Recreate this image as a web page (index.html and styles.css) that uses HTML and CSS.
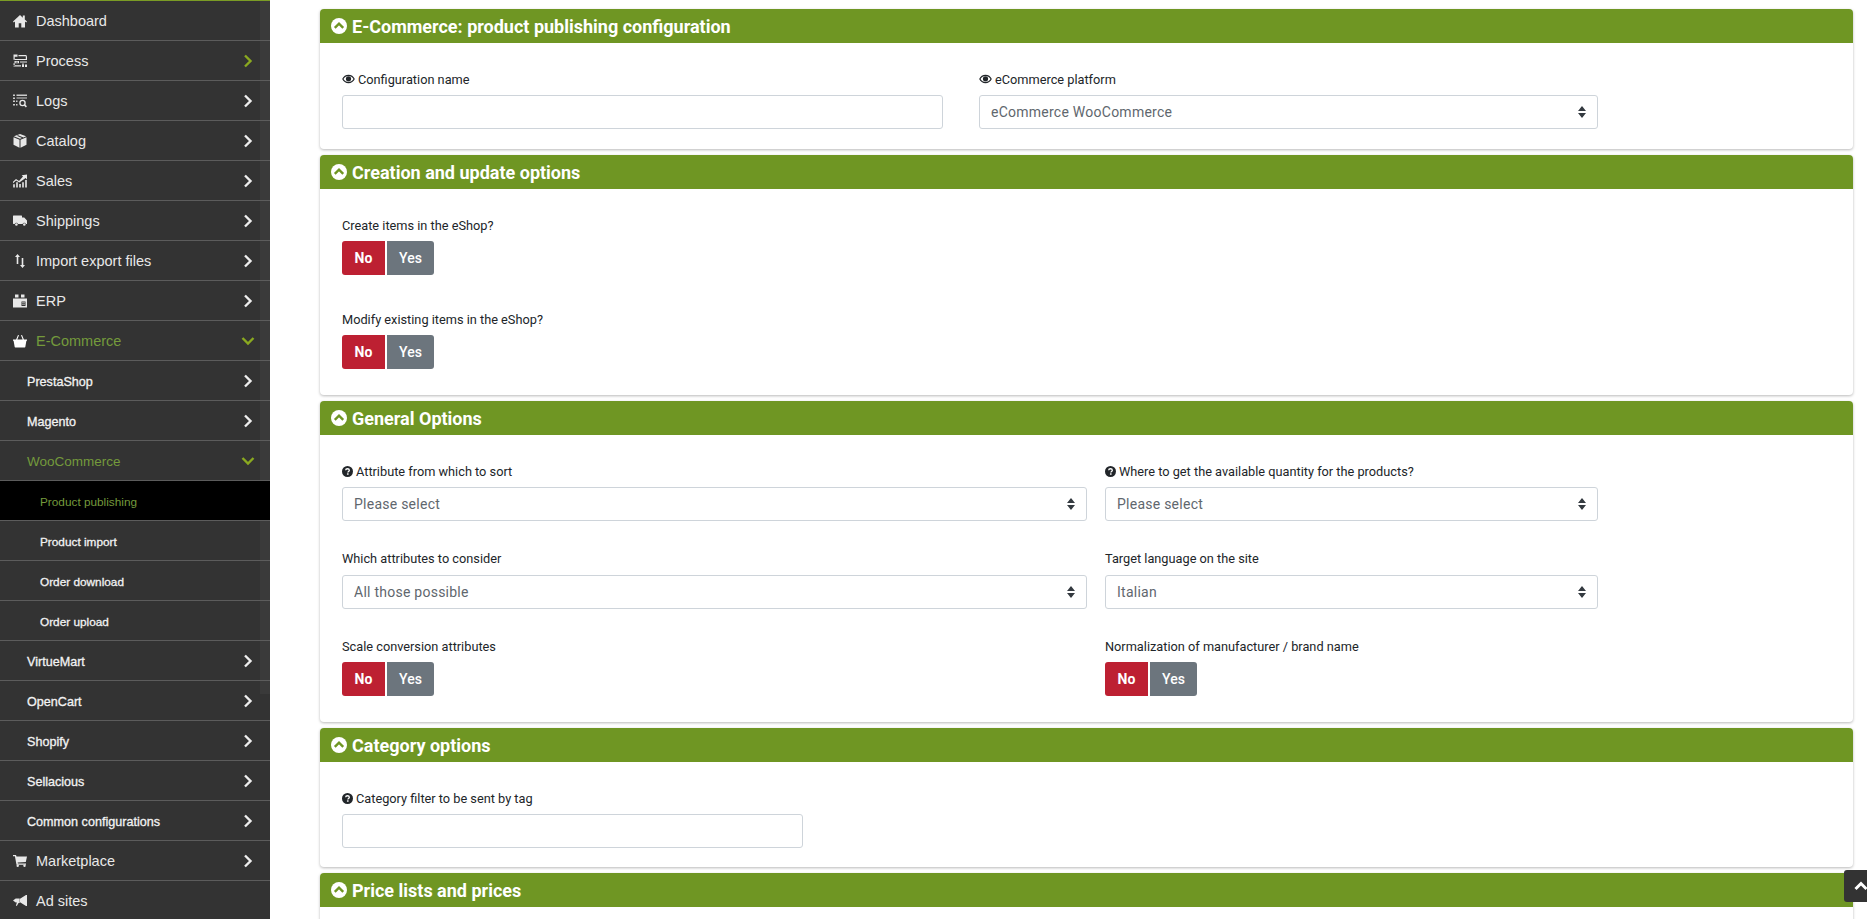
FILE: index.html
```html
<!DOCTYPE html>
<html lang="en">
<head>
<meta charset="utf-8">
<title>E-Commerce: product publishing configuration</title>
<link rel="stylesheet" href="styles.css">
</head>
<body>
<svg class="defs" width="0" height="0" aria-hidden="true">
  <symbol id="i-right" viewBox="0 0 10 14"><path d="M2 1.500 7.500 7 2 12.500" fill="none" stroke="currentColor" stroke-width="2.400"/></symbol>
  <symbol id="i-down" viewBox="0 0 14 10"><path d="M1.500 2 7 7.500 12.500 2" fill="none" stroke="currentColor" stroke-width="2.400"/></symbol>
  <symbol id="i-home" viewBox="0 0 14 13"><path d="M7 .5 0 7l.8.9L2 6.900V13h3.700V8.800h2.600V13H12V6.900l1.200 1 .8-.9-2.200-2V1h-2v2.300z" fill="currentColor"/></symbol>
  <symbol id="i-process" viewBox="0 0 14 13"><path d="M.5 0h4v2.200h-4zM.5 2.200h1.200v3H.5zM5.500.6h8v1.100h-8zM12.800 1.700H14v2.800h-1.200zM1.500 4.500H14v1H1.500zM1.500 6.500h4.500v2.300H1.500zM2.600 7.200h2.400v.9H2.600zM7 7h7v1.100H7zM.5 8.800h1.200v2.700H.5zM.5 10.800h7.500v1.200H.5zM9 10h2v2.500H9zM12 10h2v2.500h-2zM9.500 8.800h1v1.200h-1z" fill="currentColor" fill-rule="evenodd"/></symbol>
  <symbol id="i-logs" viewBox="0 0 14 13"><path d="M0 0h2v1.500H0zM3.500 0H14v1.500H3.500zM3.500 3H14v1H3.500zM0 3h2v1.500H0zM0 6h2v1.500H0zM0 9.500h2V11H0zM3 6h1.500v1.500H3zM3 9.500h1.500V11H3z" fill="currentColor" opacity=".85"/><circle cx="9.500" cy="8.500" r="2.600" fill="none" stroke="currentColor" stroke-width="1.300"/><path d="m11.400 10.400 2 2" stroke="currentColor" stroke-width="1.500"/></symbol>
  <symbol id="i-box" viewBox="0 0 14 14"><path d="M7 0 .9 2.300 7 4.800l2-.8L3.800 1.800 5.200 1.300 10.500 3.500 13.100 2.300zM.5 3.300v7.500L6.500 13.700V5.700zM13.500 3.300 7.500 5.700v8l6-2.900z" fill="currentColor"/></symbol>
  <symbol id="i-sales" viewBox="0 0 14 13"><path d="M0 7.200 3 4.600l3 1.800 4-4.300L8.700.8 14 0v5l-1.400-1.500-6.300 4.600-3.200-2L0 8.700z" fill="currentColor"/><path d="M0 9.800h2V13H0zM3 7.800h2V13H3zM6 9.500h2V13H6zM9 7.800h2V13H9zM12 5.600h2V13h-2z" fill="currentColor" opacity=".8"/></symbol>
  <symbol id="i-truck" viewBox="0 0 14 11"><path d="M0 .5C0 .2.200 0 .5 0h8c.3 0 .5.200.5.500V2h2.200L14 5v3.500h-1.100a1.700 1.700 0 0 0-3.300 0H5a1.700 1.700 0 0 0-3.300 0H.5c-.3 0-.5-.200-.5-.500z" fill="currentColor"/><circle cx="3.400" cy="9" r="1.300" fill="currentColor"/><circle cx="11.300" cy="9" r="1.300" fill="currentColor"/></symbol>
  <symbol id="i-updown" viewBox="0 0 10 14"><path d="M2.500 0 5 3H3.300v7H1.700V3H0zM7.500 14 5 11h1.700V4h1.600v7H10z" fill="currentColor"/></symbol>
  <symbol id="i-erp" viewBox="0 0 14 13"><path d="M2 0h3.500v3H2zM8 0h3.500v3H8zM0 4h14v9H0zM8.500 7v4.500h4V7z" fill="currentColor" fill-rule="evenodd"/><path d="M9 8h3v.6H9zM9 9.300h3v.6H9z" fill="currentColor"/></symbol>
  <symbol id="i-basket" viewBox="0 0 14 13"><path d="M0 5h3.100L5 .4l1 .4L4.300 5h5.400L8 .8l1-.4L10.900 5H14v1.200h-.6L12.300 12.500c0 .3-.3.500-.6.500H2.300c-.3 0-.6-.2-.6-.5L.6 6.200H0z" fill="currentColor"/></symbol>
  <symbol id="i-cart" viewBox="0 0 14 12"><path d="M0 0h3l.5 1.500H14l-1.200 5.500-8.200.6.300 1h8.100v1.200H3.500L1.900 1.200H0z" fill="currentColor"/><circle cx="4.700" cy="10.800" r="1.200" fill="currentColor"/><circle cx="11.500" cy="10.800" r="1.200" fill="currentColor"/></symbol>
  <symbol id="i-bullhorn" viewBox="0 0 14 12"><path d="M13 0h1v11h-1L7 7.300V3.700zM5.500 3.500h1.200v4.500H5.500L3.800 11l-.9-.4 1-3H2.700L0 5.500 2.700 3.500z" fill="currentColor"/></symbol>
  <symbol id="i-circle-up" viewBox="0 0 16 16"><circle cx="8" cy="8" r="8" fill="currentColor"/><path d="M3.800 9.800 8 5.600l4.200 4.200" fill="none" stroke="#6f9623" stroke-width="2.400"/></symbol>
  <symbol id="i-eye" viewBox="0 0 14 10"><path d="M7 .5C4 .5 1.500 2.200.2 5 1.500 7.800 4 9.500 7 9.500s5.500-1.700 6.800-4.500C12.500 2.200 10 .5 7 .5zm0 1.300C9.100 1.800 11.300 3 12.400 5 11.300 7 9.100 8.200 7 8.200S2.700 7 1.600 5C2.700 3 4.900 1.800 7 1.800z" fill="currentColor"/><circle cx="7" cy="4.800" r="2.800" fill="currentColor"/></symbol>
  <symbol id="i-question" viewBox="0 0 12 12"><circle cx="6" cy="6" r="6" fill="currentColor"/><path d="M4 4.600C4 3.500 4.900 3 6 3s2 .6 2 1.600c0 1.400-1.600 1.300-1.600 2.500" fill="none" stroke="#fff" stroke-width="1.400"/><path d="M5.400 8h1.800v1.500H5.400z" fill="#fff"/></symbol>
  <symbol id="i-chev-up" viewBox="0 0 14 10"><path d="M1.500 8 7 2.500 12.500 8" fill="none" stroke="currentColor" stroke-width="3"/></symbol>
</svg>

<div class="page">
  <nav class="sidebar">
    <span class="sb-track"></span>
    <a class="nav-item"><svg class="nav-ic"><use href="#i-home"/></svg><span class="nav-text">Dashboard</span></a>
    <a class="nav-item"><svg class="nav-ic"><use href="#i-process"/></svg><span class="nav-text">Process</span><svg class="chev green"><use href="#i-right"/></svg></a>
    <a class="nav-item"><svg class="nav-ic"><use href="#i-logs"/></svg><span class="nav-text">Logs</span><svg class="chev"><use href="#i-right"/></svg></a>
    <a class="nav-item"><svg class="nav-ic"><use href="#i-box"/></svg><span class="nav-text">Catalog</span><svg class="chev"><use href="#i-right"/></svg></a>
    <a class="nav-item"><svg class="nav-ic"><use href="#i-sales"/></svg><span class="nav-text">Sales</span><svg class="chev"><use href="#i-right"/></svg></a>
    <a class="nav-item"><svg class="nav-ic"><use href="#i-truck"/></svg><span class="nav-text">Shippings</span><svg class="chev"><use href="#i-right"/></svg></a>
    <a class="nav-item"><svg class="nav-ic"><use href="#i-updown"/></svg><span class="nav-text">Import export files</span><svg class="chev"><use href="#i-right"/></svg></a>
    <a class="nav-item"><svg class="nav-ic"><use href="#i-erp"/></svg><span class="nav-text">ERP</span><svg class="chev"><use href="#i-right"/></svg></a>
    <a class="nav-item open"><svg class="nav-ic white"><use href="#i-basket"/></svg><span class="nav-text">E-Commerce</span><svg class="chev-d"><use href="#i-down"/></svg></a>
    <a class="nav-item sub"><span class="nav-text">PrestaShop</span><svg class="chev"><use href="#i-right"/></svg></a>
    <a class="nav-item sub"><span class="nav-text">Magento</span><svg class="chev"><use href="#i-right"/></svg></a>
    <a class="nav-item sub open"><span class="nav-text">WooCommerce</span><svg class="chev-d"><use href="#i-down"/></svg></a>
    <a class="nav-item subsub active"><span class="nav-text">Product publishing</span></a>
    <a class="nav-item subsub"><span class="nav-text">Product import</span></a>
    <a class="nav-item subsub"><span class="nav-text">Order download</span></a>
    <a class="nav-item subsub"><span class="nav-text">Order upload</span></a>
    <a class="nav-item sub"><span class="nav-text">VirtueMart</span><svg class="chev"><use href="#i-right"/></svg></a>
    <a class="nav-item sub"><span class="nav-text">OpenCart</span><svg class="chev"><use href="#i-right"/></svg></a>
    <a class="nav-item sub"><span class="nav-text">Shopify</span><svg class="chev"><use href="#i-right"/></svg></a>
    <a class="nav-item sub"><span class="nav-text">Sellacious</span><svg class="chev"><use href="#i-right"/></svg></a>
    <a class="nav-item sub"><span class="nav-text">Common configurations</span><svg class="chev"><use href="#i-right"/></svg></a>
    <a class="nav-item"><svg class="nav-ic"><use href="#i-cart"/></svg><span class="nav-text">Marketplace</span><svg class="chev"><use href="#i-right"/></svg></a>
    <a class="nav-item"><svg class="nav-ic"><use href="#i-bullhorn"/></svg><span class="nav-text">Ad sites</span></a>
  </nav>

  <main class="content">
    <section class="card">
      <h2 class="card-head"><svg class="head-ic"><use href="#i-circle-up"/></svg>E-Commerce: product publishing configuration</h2>
      <div class="card-body grid-a">
        <div class="field">
          <label class="lbl"><svg class="eye"><use href="#i-eye"/></svg>Configuration name</label>
          <input class="ctl" type="text">
        </div>
        <div class="field">
          <label class="lbl"><svg class="eye"><use href="#i-eye"/></svg>eCommerce platform</label>
          <select class="ctl sel"><option>eCommerce WooCommerce</option></select>
        </div>
      </div>
    </section>

    <section class="card">
      <h2 class="card-head"><svg class="head-ic"><use href="#i-circle-up"/></svg>Creation and update options</h2>
      <div class="card-body stack">
        <div class="field">
          <label class="lbl">Create items in the eShop?</label>
          <div class="toggle"><button class="btn no">No</button><button class="btn yes">Yes</button></div>
        </div>
        <div class="field">
          <label class="lbl">Modify existing items in the eShop?</label>
          <div class="toggle"><button class="btn no">No</button><button class="btn yes">Yes</button></div>
        </div>
      </div>
    </section>

    <section class="card">
      <h2 class="card-head"><svg class="head-ic"><use href="#i-circle-up"/></svg>General Options</h2>
      <div class="card-body grid-b">
        <div class="field">
          <label class="lbl"><svg class="qm"><use href="#i-question"/></svg>Attribute from which to sort</label>
          <select class="ctl sel"><option>Please select</option></select>
        </div>
        <div class="field">
          <label class="lbl"><svg class="qm"><use href="#i-question"/></svg>Where to get the available quantity for the products?</label>
          <select class="ctl sel"><option>Please select</option></select>
        </div>
        <div class="field">
          <label class="lbl">Which attributes to consider</label>
          <select class="ctl sel"><option>All those possible</option></select>
        </div>
        <div class="field">
          <label class="lbl">Target language on the site</label>
          <select class="ctl sel"><option>Italian</option></select>
        </div>
        <div class="field">
          <label class="lbl">Scale conversion attributes</label>
          <div class="toggle"><button class="btn no">No</button><button class="btn yes">Yes</button></div>
        </div>
        <div class="field">
          <label class="lbl">Normalization of manufacturer / brand name</label>
          <div class="toggle"><button class="btn no">No</button><button class="btn yes">Yes</button></div>
        </div>
      </div>
    </section>

    <section class="card">
      <h2 class="card-head"><svg class="head-ic"><use href="#i-circle-up"/></svg>Category options</h2>
      <div class="card-body grid-c">
        <div class="field">
          <label class="lbl"><svg class="qm"><use href="#i-question"/></svg>Category filter to be sent by tag</label>
          <input class="ctl" type="text">
        </div>
      </div>
    </section>

    <section class="card">
      <h2 class="card-head"><svg class="head-ic"><use href="#i-circle-up"/></svg>Price lists and prices</h2>
      <div class="card-body tail"></div>
    </section>
  </main>
  <a class="to-top"><svg><use href="#i-chev-up"/></svg></a>
</div>
</body>
</html>
```

FILE: styles.css
```css
* { box-sizing: border-box; }
html, body { margin: 0; height: 100%; overflow: hidden; }
body { background: #fff; font-family: Roboto, "Liberation Sans", sans-serif; color: #212529; }
.defs { position: absolute; }
.page { display: flex; height: 919px; position: relative; overflow: hidden; }

.sidebar { width: 270px; flex: none; background: #333; border-top: 1px solid #7b9c25; position: relative; font-family: "Liberation Sans", Arial, sans-serif; }
.sb-track { position: absolute; top: 0; right: 0; width: 10px; height: 693px; background: #3a3a3a; }
.nav-item { position: relative; display: flex; align-items: center; height: 40px; padding-left: 13px; border-bottom: 1px solid #5c5c5c; color: #e8e8e8; font-size: 14.500px; }
.nav-ic { width: 14px; height: 14px; margin-right: 9px; color: #e8e8e8; flex: none; }
.nav-ic.white { color: #fff; }
.nav-text { flex: 1; }
.chev { width: 10px; height: 14px; margin-right: 17px; color: #eee; flex: none; }
.chev.green { color: #8aa920; }
.chev-d { width: 14px; height: 10px; margin-right: 15px; color: #8aa920; flex: none; }
.nav-item.open { color: #749a3c; }
.sub { padding-left: 27px; padding-top: 2px; font-size: 12.600px; color: #f2f2f2; -webkit-text-stroke: .3px #f2f2f2; }
.sub .chev { position: relative; top: -1px; }
.sub.open { color: #749a3c; -webkit-text-stroke: 0; font-size: 13.500px; padding-top: 1px; }
.subsub { padding-left: 40px; padding-top: 2px; font-size: 11.800px; color: #f2f2f2; -webkit-text-stroke: .3px #f2f2f2; }
.subsub.active { background: #000; color: #749a3c; -webkit-text-stroke: 0; }

.content { flex: 1; min-width: 0; padding: 9px 14px 0 50px; display: flex; flex-direction: column; gap: 6px; overflow: hidden; }
.card { flex: none; background: #fff; border-radius: 4px; box-shadow: 0 1px 3px rgba(0,0,0,.28); }
.card-head { margin: 0; height: 34px; display: flex; align-items: center; gap: 5px; padding-left: 11px; background: #6f9623; color: #fff; font-size: 18px; font-weight: 700; border-radius: 4px 4px 0 0; }
.head-ic { width: 16px; height: 16px; color: #fff; flex: none; }
.card-body { padding: 26px 22px 19px; }
.grid-a { display: grid; grid-template-columns: 601px 619px; column-gap: 36px; padding-bottom: 20px; }
.stack { display: flex; flex-direction: column; gap: 34px; padding-bottom: 26px; }
.grid-b { display: grid; grid-template-columns: 745px 493px; column-gap: 18px; row-gap: 27.500px; padding-bottom: 26px; }
.grid-c { width: 505px; }
.tail { height: 120px; }

.field { display: flex; flex-direction: column; gap: 6px; }
.lbl { display: flex; align-items: center; height: 20px; font-size: 12.750px; color: #212529; }
.eye { width: 13px; height: 10px; margin-right: 3px; color: #212529; }
.qm { width: 11px; height: 11px; margin-right: 3px; color: #212529; }
.ctl { display: block; width: 100%; height: 34px; border: 1px solid #ced4da; border-radius: 3px; background: #fff; padding: 0 11px; font: 400 14px Roboto, sans-serif; letter-spacing: .25px; color: #5f676e; }
.sel { appearance: none; -webkit-appearance: none; background-repeat: no-repeat; background-position: right 11px center; background-size: 8px 12px; background-image: url("data:image/svg+xml,%3Csvg xmlns='http://www.w3.org/2000/svg' viewBox='0 0 8 12'%3E%3Cpath d='M4 0 8 5H0zM4 12 0 7h8z' fill='%23343a40'/%3E%3C/svg%3E"); }

.toggle { display: flex; gap: 2px; }
.btn { height: 34px; border: 0; padding: 0; font: 700 14px Roboto, sans-serif; color: #fff; }
.no { width: 43px; background: #bd2032; border-radius: 3px 0 0 3px; }
.yes { width: 47px; background: #6c757d; border-radius: 0 3px 3px 0; font-weight: 500; }

.to-top { position: absolute; right: 0; top: 870px; width: 23px; height: 32px; background: #333; border-radius: 3px 0 0 3px; display: flex; align-items: center; justify-content: flex-end; color: #fff; }
.to-top svg { width: 14px; height: 10px; margin-right: -1px; }
```
